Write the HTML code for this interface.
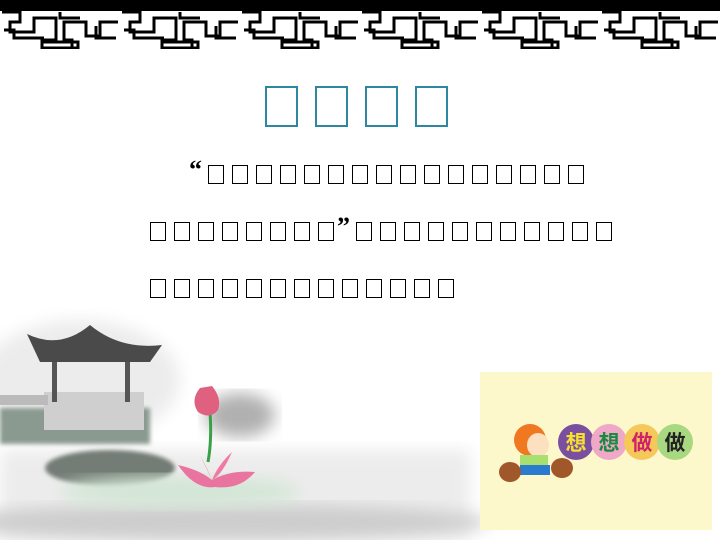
<!DOCTYPE html>
<html><head><meta charset="utf-8"><style>
body{margin:0;width:720px;height:540px;overflow:hidden;background:#fff;position:relative;font-family:"Liberation Sans",sans-serif}
.b{position:absolute;box-sizing:border-box;border:1.4px solid #000;width:16px;height:19px}
.t{position:absolute;box-sizing:border-box;border:2.5px solid #2e86a0;width:33px;height:41px}
.q{position:absolute;font:bold 26px "Liberation Serif",serif;color:#000;line-height:1}
</style></head><body>
<svg width="720" height="540" style="position:absolute;left:0;top:0">
<defs>
<filter id="bl"><feGaussianBlur stdDeviation="8"/></filter>
<filter id="bl2"><feGaussianBlur stdDeviation="2"/></filter>
<pattern id="fret" x="0" y="0" width="120" height="50" patternUnits="userSpaceOnUse">
<g fill="none" stroke="#000" stroke-width="3">
<path d="M2 12h18v10h-10v10h24v-14h22v22h-14v12h30v-12h-8v-18h22v14h14v-14h18"/>
<path d="M4 30h10v8h30M60 12v6h20M96 26v12h20"/>
<path d="M42 42h36v6h-36z"/>
</g></pattern>
</defs>
<rect x="0" y="0" width="720" height="9" fill="#000"/>
<rect x="0" y="9" width="720" height="40" fill="url(#fret)"/>
<rect x="0" y="9" width="720" height="2" fill="#000"/>
<!-- landscape -->
<rect x="0" y="450" width="470" height="90" fill="#ececec" filter="url(#bl)"/>
<ellipse cx="220" cy="522" rx="270" ry="18" fill="#cdcdcd" filter="url(#bl)"/>
<ellipse cx="80" cy="380" rx="100" ry="60" fill="#ececec" filter="url(#bl)"/>
<rect x="0" y="408" width="150" height="36" fill="#8a9a90" filter="url(#bl2)"/>
<rect x="44" y="392" width="100" height="38" fill="#cfcfcf"/>
<rect x="60" y="362" width="75" height="30" fill="#ececec"/>
<rect x="52" y="362" width="5" height="40" fill="#555"/>
<rect x="125" y="362" width="5" height="40" fill="#555"/>
<rect x="0" y="395" width="48" height="10" fill="#bbb"/>
<path d="M27 334 Q60 350 90 325 Q120 350 162 345 L150 362 L40 362 Z" fill="#4a4a4a"/>
<ellipse cx="110" cy="468" rx="65" ry="18" fill="#737d74" filter="url(#bl2)"/>
<ellipse cx="180" cy="492" rx="120" ry="16" fill="#d3e6d6" filter="url(#bl)"/>
<ellipse cx="240" cy="415" rx="35" ry="22" fill="#b0b0b0" filter="url(#bl)"/>
<path d="M210 412 Q212 440 208 462" stroke="#3aa048" stroke-width="3" fill="none"/>
<path d="M200 388 Q190 400 198 412 Q210 420 218 410 Q222 398 212 386 Z" fill="#e0607f"/>
<path d="M178 465 Q200 470 212 480 Q230 470 255 472 Q240 490 215 487 Q195 490 178 465Z" fill="#ea74a0"/>
<path d="M200 455 Q208 470 212 480 Q218 465 232 452 Q222 475 212 480Z" fill="#f07aa5"/>
<!-- yellow panel -->
<rect x="480" y="372" width="232" height="158" fill="#fdf8cb"/>
<circle cx="576" cy="442" r="18" fill="#7a4fa0"/>
<circle cx="609" cy="442" r="18" fill="#f0a8c8"/>
<circle cx="642" cy="442" r="18" fill="#f5c85a"/>
<circle cx="675" cy="442" r="18" fill="#a8d880"/>
<text x="576" y="450" font-size="21" text-anchor="middle" fill="#f5e030" font-family="Noto Sans CJK SC,sans-serif" font-weight="bold">想</text>
<text x="609" y="450" font-size="21" text-anchor="middle" fill="#1a8a40" font-family="Noto Sans CJK SC,sans-serif" font-weight="bold">想</text>
<text x="642" y="450" font-size="21" text-anchor="middle" fill="#d0206a" font-family="Noto Sans CJK SC,sans-serif" font-weight="bold">做</text>
<text x="675" y="450" font-size="21" text-anchor="middle" fill="#222" font-family="Noto Sans CJK SC,sans-serif" font-weight="bold">做</text>
<circle cx="530" cy="440" r="16" fill="#f07820"/>
<ellipse cx="538" cy="445" rx="11" ry="12" fill="#fde0c0"/>
<rect x="520" y="455" width="28" height="12" fill="#a8e070"/>
<rect x="520" y="465" width="30" height="10" fill="#2a7ad0"/>
<ellipse cx="510" cy="472" rx="11" ry="10" fill="#a0582a"/>
<ellipse cx="562" cy="468" rx="11" ry="10" fill="#a0582a"/>
</svg>
<div class="t" style="left:265px;top:86px"></div>
<div class="t" style="left:315px;top:86px"></div>
<div class="t" style="left:365px;top:86px"></div>
<div class="t" style="left:415px;top:86px"></div>
<div class="q" style="left:189px;top:157px">“</div>
<div class="q" style="left:337px;top:214px">”</div>
<script>
function row(x,y,n){for(var i=0;i<n;i++){var d=document.createElement('div');d.className='b';d.style.left=(x+i*24)+'px';d.style.top=y+'px';document.body.appendChild(d);}}
row(208,165,16);row(150,222,8);row(356,222,11);row(150,279,13);
</script>
</body></html>
